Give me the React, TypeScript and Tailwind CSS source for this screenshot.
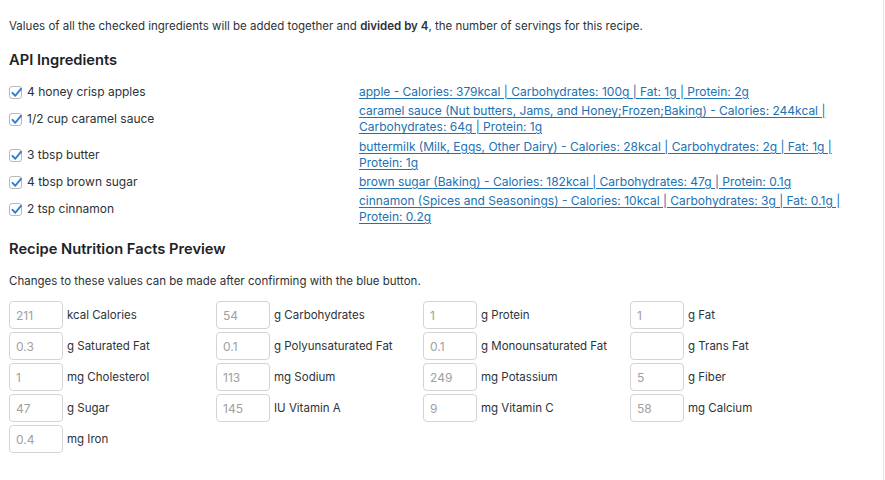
import React from 'react';

const ingredients = [
    {
        label: "4 honey crisp apples",
        match: "apple - Calories: 379kcal | Carbohydrates: 100g | Fat: 1g | Protein: 2g",
        wraps: false
    },
    {
        label: "1/2 cup caramel sauce",
        match: "caramel sauce (Nut butters, Jams, and Honey;Frozen;Baking) - Calories: 244kcal | Carbohydrates: 64g | Protein: 1g",
        wraps: true
    },
    {
        label: "3 tbsp butter",
        match: "buttermilk (Milk, Eggs, Other Dairy) - Calories: 28kcal | Carbohydrates: 2g | Fat: 1g | Protein: 1g",
        wraps: true
    },
    {
        label: "4 tbsp brown sugar",
        match: "brown sugar (Baking) - Calories: 182kcal | Carbohydrates: 47g | Protein: 0.1g",
        wraps: false
    },
    {
        label: "2 tsp cinnamon",
        match: "cinnamon (Spices and Seasonings) - Calories: 10kcal | Carbohydrates: 3g | Fat: 0.1g | Protein: 0.2g",
        wraps: true
    }
];

const nutrients = [
    { value: "211", label: "kcal Calories" },
    { value: "54", label: "g Carbohydrates" },
    { value: "1", label: "g Protein" },
    { value: "1", label: "g Fat" },
    { value: "0.3", label: "g Saturated Fat" },
    { value: "0.1", label: "g Polyunsaturated Fat" },
    { value: "0.1", label: "g Monounsaturated Fat" },
    { value: "", label: "g Trans Fat" },
    { value: "1", label: "mg Cholesterol" },
    { value: "113", label: "mg Sodium" },
    { value: "249", label: "mg Potassium" },
    { value: "5", label: "g Fiber" },
    { value: "47", label: "g Sugar" },
    { value: "145", label: "IU Vitamin A" },
    { value: "9", label: "mg Vitamin C" },
    { value: "58", label: "mg Calcium" },
    { value: "0.4", label: "mg Iron" }
];

function Checkbox() {
    return (
        <span className="relative inline-block w-[13px] h-[13px] shrink-0 rounded-[3px] border border-[#b8b8b8] bg-white">
            <svg viewBox="0 0 16 16" className="absolute left-[0px] top-[-1px] w-[13px] h-[13px]">
                <path d="M3 8.5 L6.5 12 L13.5 3.5" fill="none" stroke="#2f7fd0" strokeWidth="2.4" strokeLinecap="round" strokeLinejoin="round" />
            </svg>
        </span>
    );
}

export default function App() {
    return (
        <div className="w-[885px] h-[480px] bg-white font-['Inter','Liberation_Sans',sans-serif] text-[#2c3338]">
            <div className="w-[884px] h-full border-r border-[#e2e2e2] pl-[9px] pt-[18px]">
                <p className="text-[11.5px] leading-[16px]">
                    Values of all the checked ingredients will be added together and <strong className="font-semibold">divided by 4</strong>, the number of servings for this recipe.
                </p>

                <h2 className="mt-[16px] text-[14.7px] leading-[20px] font-semibold text-[#1d2327]">API Ingredients</h2>

                {/* ingredient -> matched API food */}
                <div className="mt-[13px] flex flex-col">
                    {ingredients.map((ing, i) => (
                        <div key={i} className={`flex items-center ${ing.wraps ? 'py-[2px]' : 'py-[1px]'}`}>
                            <div className="w-[350px] flex items-center gap-[5px] text-[12px] leading-[16px]">
                                <Checkbox />
                                <span>{ing.label}</span>
                            </div>
                            <a className="w-[488px] text-[12px] leading-[16px] text-[#2271b1] underline underline-offset-[2px]" href="#">
                                {ing.match}
                            </a>
                        </div>
                    ))}
                </div>

                <h2 className="mt-[12px] text-[14.7px] leading-[20px] font-semibold text-[#1d2327]">Recipe Nutrition Facts Preview</h2>

                <p className="mt-[14px] text-[11.5px] leading-[16px]">
                    Changes to these values can be made after confirming with the blue button.
                </p>

                <div className="mt-[12px] grid grid-cols-4 w-[828px] gap-y-[3px]">
                    {nutrients.map((n, i) => (
                        <div key={i} className="flex items-center gap-[4px]">
                            <input
                                readOnly
                                value={n.value}
                                className="w-[54px] h-[28px] rounded-[4px] border border-[#d4d4d4] bg-white px-[6px] text-[12px] text-[#a0a0a0] outline-none"
                            />
                            <span className="text-[11.5px] leading-[16px]">{n.label}</span>
                        </div>
                    ))}
                </div>
            </div>
        </div>
    );
}
